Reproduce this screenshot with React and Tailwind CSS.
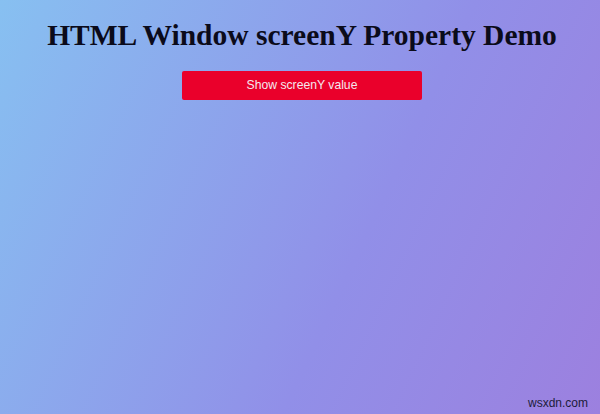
export default function App() {
  return (
    <div className="relative w-[600px] h-[414px] overflow-hidden bg-[linear-gradient(115deg,#87c0f1_0%,#918fe8_60%,#9c80df_100%)]">
      <div className="flex flex-col items-center pt-[18px] pl-[4px]">
        <h1 className="text-[29.5px] leading-[34px] font-bold text-[#0b0b1a] font-['Liberation_Serif',serif]">
          HTML Window screenY Property Demo
        </h1>
        <button className="mt-[19px] w-[240px] h-[29px] bg-[#ea002b] text-[#f4e8ee] text-[12.2px] rounded-[2px] font-['Liberation_Sans',Arial,sans-serif]">
          Show screenY value
        </button>
      </div>
      <div className="absolute right-[12px] bottom-[5px] text-[12px] leading-none text-[#1c1c3a] font-['Liberation_Sans',Arial,sans-serif]">
        wsxdn.com
      </div>
    </div>
  );
}
